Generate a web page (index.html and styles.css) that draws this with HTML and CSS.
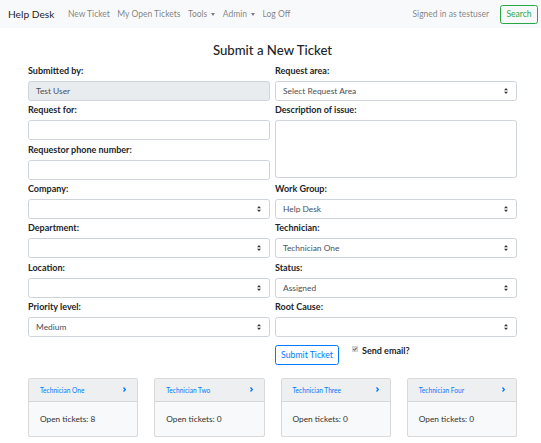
FILE: index.html
```html
<!DOCTYPE html>
<html lang="en">
<head>
<meta charset="utf-8">
<title>Help Desk - Submit a New Ticket</title>
<link rel="stylesheet" href="styles.css">
</head>
<body>
<nav class="navbar">
  <a class="brand" href="#">Help Desk</a>
  <ul class="nav">
    <li class="nav-link">New Ticket</li>
    <li class="nav-link">My Open Tickets</li>
    <li class="nav-link">Tools<span class="caret"></span></li>
    <li class="nav-link">Admin<span class="caret"></span></li>
    <li class="nav-link">Log Off</li>
  </ul>
  <span class="signed">Signed in as testuser</span>
  <button class="btn-search" type="button">Search</button>
</nav>

<main class="container">
  <h1 class="title">Submit a New Ticket</h1>
  <div class="form-grid">
    <div class="col">
      <div class="group">
        <label class="lbl">Submitted by:</label>
        <div class="input disabled">Test User</div>
      </div>
      <div class="group">
        <label class="lbl">Request for:</label>
        <div class="input"></div>
      </div>
      <div class="group">
        <label class="lbl">Requestor phone number:</label>
        <div class="input"></div>
      </div>
      <div class="group">
        <label class="lbl">Company:</label>
        <div class="input select"><span></span><svg class="arrows" width="4" height="6" viewBox="0 0 4 6"><path d="M2 0L4 2.3H0Z M2 6L0 3.7H4Z" fill="#343a40"/></svg></div>
      </div>
      <div class="group">
        <label class="lbl">Department:</label>
        <div class="input select"><span></span><svg class="arrows" width="4" height="6" viewBox="0 0 4 6"><path d="M2 0L4 2.3H0Z M2 6L0 3.7H4Z" fill="#343a40"/></svg></div>
      </div>
      <div class="group">
        <label class="lbl">Location:</label>
        <div class="input select"><span></span><svg class="arrows" width="4" height="6" viewBox="0 0 4 6"><path d="M2 0L4 2.3H0Z M2 6L0 3.7H4Z" fill="#343a40"/></svg></div>
      </div>
      <div class="group">
        <label class="lbl">Priority level:</label>
        <div class="input select"><span>Medium</span><svg class="arrows" width="4" height="6" viewBox="0 0 4 6"><path d="M2 0L4 2.3H0Z M2 6L0 3.7H4Z" fill="#343a40"/></svg></div>
      </div>
    </div>
    <div class="col">
      <div class="group">
        <label class="lbl">Request area:</label>
        <div class="input select"><span>Select Request Area</span><svg class="arrows" width="4" height="6" viewBox="0 0 4 6"><path d="M2 0L4 2.3H0Z M2 6L0 3.7H4Z" fill="#343a40"/></svg></div>
      </div>
      <div class="group tall">
        <label class="lbl">Description of issue:</label>
        <div class="input textarea"></div>
      </div>
      <div class="group">
        <label class="lbl">Work Group:</label>
        <div class="input select"><span>Help Desk</span><svg class="arrows" width="4" height="6" viewBox="0 0 4 6"><path d="M2 0L4 2.3H0Z M2 6L0 3.7H4Z" fill="#343a40"/></svg></div>
      </div>
      <div class="group">
        <label class="lbl">Technician:</label>
        <div class="input select"><span>Technician One</span><svg class="arrows" width="4" height="6" viewBox="0 0 4 6"><path d="M2 0L4 2.3H0Z M2 6L0 3.7H4Z" fill="#343a40"/></svg></div>
      </div>
      <div class="group">
        <label class="lbl">Status:</label>
        <div class="input select"><span>Assigned</span><svg class="arrows" width="4" height="6" viewBox="0 0 4 6"><path d="M2 0L4 2.3H0Z M2 6L0 3.7H4Z" fill="#343a40"/></svg></div>
      </div>
      <div class="group">
        <label class="lbl">Root Cause:</label>
        <div class="input select"><span></span><svg class="arrows" width="4" height="6" viewBox="0 0 4 6"><path d="M2 0L4 2.3H0Z M2 6L0 3.7H4Z" fill="#343a40"/></svg></div>
      </div>
      <div class="submit-row">
        <button class="btn-submit" type="button">Submit Ticket</button>
        <label class="check">
          <svg class="checkbox" width="6" height="6" viewBox="0 0 6 6"><rect x="0.25" y="0.25" width="5.5" height="5.5" rx="0.8" fill="#dcdcdc" stroke="#b5b5b5" stroke-width="0.5"/><path d="M1.3 3.1L2.5 4.3L4.7 1.6" fill="none" stroke="#333" stroke-width="0.9"/></svg>
          <span>Send email?</span>
        </label>
      </div>
    </div>
  </div>

  <div class="cards">
    <div class="card">
      <div class="card-header"><span>Technician One</span><svg width="3" height="5" viewBox="0 0 3 5"><path d="M0.5 0.5L2.3 2.5L0.5 4.5" fill="none" stroke="#007bff" stroke-width="1.3"/></svg></div>
      <div class="card-body">Open tickets: 8</div>
    </div>
    <div class="card">
      <div class="card-header"><span>Technician Two</span><svg width="3" height="5" viewBox="0 0 3 5"><path d="M0.5 0.5L2.3 2.5L0.5 4.5" fill="none" stroke="#007bff" stroke-width="1.3"/></svg></div>
      <div class="card-body">Open tickets: 0</div>
    </div>
    <div class="card">
      <div class="card-header"><span>Technician Three</span><svg width="3" height="5" viewBox="0 0 3 5"><path d="M0.5 0.5L2.3 2.5L0.5 4.5" fill="none" stroke="#007bff" stroke-width="1.3"/></svg></div>
      <div class="card-body">Open tickets: 0</div>
    </div>
    <div class="card">
      <div class="card-header"><span>Technician Four</span><svg width="3" height="5" viewBox="0 0 3 5"><path d="M0.5 0.5L2.3 2.5L0.5 4.5" fill="none" stroke="#007bff" stroke-width="1.3"/></svg></div>
      <div class="card-body">Open tickets: 0</div>
    </div>
  </div>
</main>
</body>
</html>
```
FILE: styles.css
```css
* { box-sizing: border-box; }
html, body { margin: 0; padding: 0; }
body {
  font-family: "Lato", "Open Sans", "Liberation Sans", sans-serif;
  color: #212529;
  background: #fff;
}

.navbar {
  display: flex;
  align-items: center;
  height: 28px;
  padding: 0 3px 0 8px;
  background: #f8f9fa;
}
.brand {
  font-size: 10.2px;
  color: rgba(0,0,0,0.9);
  text-decoration: none;
  margin-right: 13.5px;
}
.nav {
  display: flex;
  list-style: none;
  margin: 0;
  padding: 0;
  gap: 7.5px;
  flex: 1;
}
.nav-link {
  font-size: 8.5px;
  color: rgba(0,0,0,0.5);
  display: flex;
  align-items: center;
}
.caret {
  display: inline-block;
  width: 0;
  height: 0;
  margin-left: 4px;
  border-top: 3px solid rgba(0,0,0,0.5);
  border-left: 2.5px solid transparent;
  border-right: 2.5px solid transparent;
}
.signed {
  font-size: 8.5px;
  color: rgba(0,0,0,0.5);
  margin-right: 11px;
}
.btn-search {
  font-family: inherit;
  font-size: 8.5px;
  color: #28a745;
  background: transparent;
  border: 1px solid #28a745;
  border-radius: 2.6px;
  height: 19px;
  width: 38px;
  padding: 0;
}

.container {
  width: 489px;
  margin-left: 28px;
  padding-top: 12px;
}
.title {
  margin: 0 0 5px;
  font-size: 13.2px;
  line-height: 20px;
  font-weight: 500;
  text-align: center;
}

.form-grid {
  display: grid;
  grid-template-columns: 1fr 1fr;
  column-gap: 5px;
}
.col {
  display: flex;
  flex-direction: column;
}
.group {
  height: 39.33px;
  display: flex;
  flex-direction: column;
}
.group.tall { height: 78.67px; }
.lbl {
  font-size: 9px;
  font-weight: 700;
  line-height: 12px;
  margin-bottom: 4px;
}
.input {
  height: 20px;
  border: 1px solid #ced4da;
  border-radius: 2.6px;
  background: #fff;
  font-size: 8.4px;
  color: #495057;
  padding: 0 8px 0 7px;
  display: flex;
  align-items: center;
}
.input.disabled { background: #e9ecef; }
.input.select { justify-content: space-between; }
.input.textarea { height: 58px; }
.arrows { display: block; }

.submit-row {
  display: flex;
  align-items: flex-start;
  margin-top: 4.7px;
}
.btn-submit {
  font-family: inherit;
  font-size: 8.7px;
  color: #007bff;
  background: #fff;
  border: 1px solid #007bff;
  border-radius: 2.6px;
  height: 20px;
  width: 64px;
  padding: 0;
}
.check {
  display: flex;
  align-items: flex-start;
  margin-left: 13px;
  font-size: 9px;
  font-weight: 700;
  line-height: 11px;
}
.checkbox { display: block; margin-top: 1px; margin-right: 4px; }

.cards {
  display: grid;
  grid-template-columns: repeat(4, 1fr);
  column-gap: 16px;
  margin-top: 13px;
}
.card {
  border: 1px solid rgba(0,0,0,0.125);
  border-radius: 2.6px;
  background: #f8f9fa;
  overflow: hidden;
}
.card-header {
  height: 23px;
  display: flex;
  align-items: center;
  justify-content: space-between;
  padding: 0 11px 0 11px;
  background: #eeeff0;
  border-bottom: 1px solid rgba(0,0,0,0.1);
  font-size: 6.6px;
  color: #007bff;
}
.card-header svg { display: block; }
.card-body {
  height: 34px;
  display: flex;
  align-items: center;
  padding: 0 11px;
  font-size: 8.3px;
  color: #333;
}
```
